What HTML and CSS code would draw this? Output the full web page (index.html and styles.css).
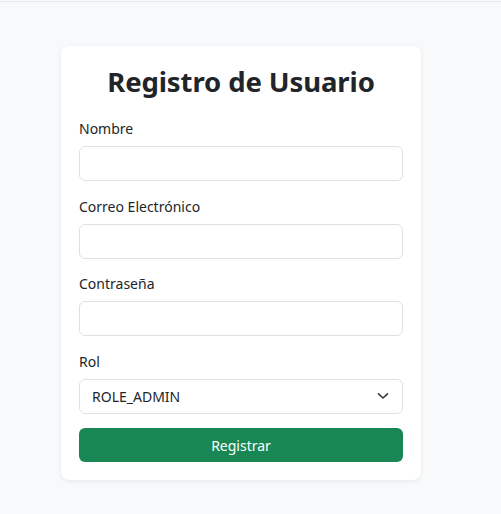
FILE: index.html
```html
<!DOCTYPE html>
<html lang="es">
<head>
<meta charset="utf-8">
<link rel="stylesheet" href="styles.css">
</head>
<body>
<div class="page">
  <div class="card">
    <h1 class="title">Registro de Usuario</h1>
    <div class="group">
      <label class="label">Nombre</label>
      <div class="input"></div>
    </div>
    <div class="group">
      <label class="label">Correo Electrónico</label>
      <div class="input"></div>
    </div>
    <div class="group">
      <label class="label">Contraseña</label>
      <div class="input"></div>
    </div>
    <div class="group">
      <label class="label">Rol</label>
      <div class="input select">
        <span>ROLE_ADMIN</span>
        <svg class="chev" width="12" height="8" viewBox="0 0 12 8"><path d="M1.5 1.8 L6 6 L10.5 1.8" fill="none" stroke="#343a40" stroke-width="1.6" stroke-linecap="round" stroke-linejoin="round"/></svg>
      </div>
    </div>
    <div class="button">Registrar</div>
  </div>
</div>
</body>
</html>
```
FILE: styles.css
```css
html, body {
  margin: 0;
  padding: 0;
}
body {
  background: #f8f9fa;
  font-family: "Noto Sans", "Open Sans", sans-serif;
  color: #212529;
  width: 501px;
  height: 514px;
  overflow: hidden;
}
.page {
  border-top: 1px solid #e6e7e8;
  margin-top: 1px;
  padding-top: 44px;
  display: flex;
  justify-content: flex-start;
  padding-left: 61px;
}
.card {
  width: 360px;
  box-sizing: border-box;
  background: #fff;
  border-radius: 8px;
  box-shadow: 0 1px 4px rgba(0,0,0,0.08);
  padding: 18px;
  display: flex;
  flex-direction: column;
}
.title {
  margin: 0 0 18px 0;
  font-size: 27.5px;
  font-weight: 700;
  line-height: 36px;
  text-align: center;
  letter-spacing: -0.1px;
}
.group {
  display: flex;
  flex-direction: column;
  margin-bottom: 14.6px;
}
.label {
  font-size: 14px;
  line-height: 21px;
  margin-bottom: 7px;
}
.input {
  height: 35px;
  box-sizing: border-box;
  border: 1px solid #dee2e6;
  border-radius: 6px;
  background: #fff;
}
.select {
  display: flex;
  align-items: center;
  justify-content: space-between;
  padding: 0 13px 0 12px;
  font-size: 14px;
}
.chev {
  display: block;
}
.button {
  height: 34px;
  border-radius: 6px;
  background: #198754;
  color: #fff;
  font-size: 14px;
  display: flex;
  align-items: center;
  justify-content: center;
}
```
